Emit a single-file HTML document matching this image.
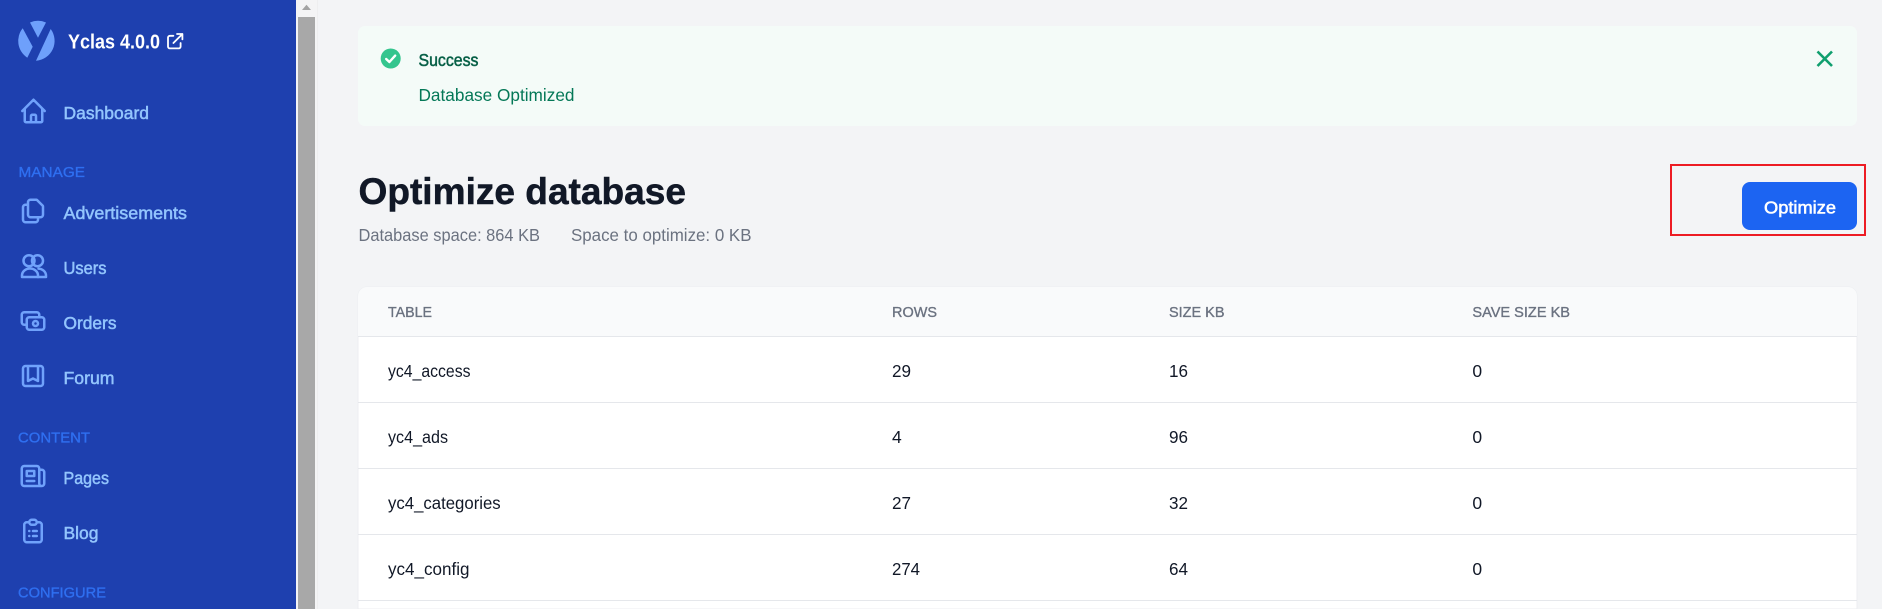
<!DOCTYPE html>
<html lang="en">
<head>
<meta charset="utf-8">
<title>Optimize database</title>
<style>
html,body{margin:0;padding:0;width:1882px;height:609px;overflow:hidden;background:#f3f4f6}
svg{display:block}
text{font-family:"Liberation Sans",sans-serif;white-space:pre}
.nav{font-size:17.5px;fill:#93c5fd;stroke:#93c5fd;stroke-width:.5px}
.sec{font-size:15px;fill:#2f6ff0;stroke:#2f6ff0;stroke-width:.35px}
.th{font-size:15px;fill:#6b7280;stroke:#6b7280;stroke-width:.35px}
.td{font-size:17.5px;fill:#111827}
.ic{fill:none;stroke:#70a2fb;stroke-width:2;stroke-linecap:round;stroke-linejoin:round}
.sub{font-size:17.5px;fill:#6b7280}
</style>
</head>
<body>
<svg xmlns="http://www.w3.org/2000/svg" width="1882" height="609" viewBox="0 0 1882 609">
  <!-- page background -->
  <rect width="1882" height="609" fill="#f3f4f6"/>

  <!-- scrollbar -->
  <rect x="296" y="0" width="22" height="609" fill="#f4f4f5"/>
  <rect x="317" y="0" width="1" height="609" fill="#eeeeef"/>
  <rect x="298" y="17" width="17" height="592" fill="#a8a8a8"/>
  <path d="M302 10L306.5 4.7L311 10Z" fill="#a3a3a3"/>

  <!-- sidebar -->
  <rect width="296" height="609" fill="#1e40af"/>

  <!-- logo -->
  <path d="M30 22.5A20 20 0 0 1 46 22.5L38 37.7Z" fill="#6ea0fb"/>
  <path d="M22.7 28.3A20 20 0 0 0 27.3 57.7L32.7 46.7Z" fill="#6ea0fb"/>
  <path d="M50.7 29A20 20 0 0 1 36 60.8Z" fill="#6ea0fb"/>
  <text x="68" y="48.7" font-size="20" font-weight="700" fill="#fff" textLength="92" lengthAdjust="spacingAndGlyphs">Yclas 4.0.0</text>
  <g transform="translate(164.4 30.4) scale(.9)" fill="none" stroke="#fff" stroke-width="2" stroke-linecap="round" stroke-linejoin="round">
    <path d="M10 6H6a2 2 0 00-2 2v10a2 2 0 002 2h10a2 2 0 002-2v-4M14 4h6m0 0v6m0-6L10 14"/>
  </g>

  <!-- nav icons -->
  <g class="ic" transform="translate(18.5 96) scale(1.25)"><path d="M3 12l2-2m0 0l7-7 7 7M5 10v10a1 1 0 001 1h3m10-11l2 2m-2-2v10a1 1 0 01-1 1h-3m-6 0a1 1 0 001-1v-4a1 1 0 011-1h2a1 1 0 011 1v4a1 1 0 001 1m-6 0h6"/></g>
  <g class="ic" transform="translate(18 196) scale(1.25)"><path d="M8 7v8a2 2 0 002 2h6M8 7V5a2 2 0 012-2h4.586a1 1 0 01.707.293l4.414 4.414a1 1 0 01.293.707V15a2 2 0 01-2 2h-2M8 7H6a2 2 0 00-2 2v10a2 2 0 002 2h8a2 2 0 002-2v-2"/></g>
  <g fill="none" stroke="#70a2fb" stroke-width="2.5" stroke-linecap="round" stroke-linejoin="round">
    <circle cx="29" cy="260.7" r="5.5"/>
    <circle cx="37.5" cy="260.7" r="5.5"/>
    <path d="M22 277v-1.5a8 7 0 0 1 16 0v1.5z"/>
    <path d="M38.5 268.6a8 7 0 0 1 7.5 6.9v1.5h-8"/>
  </g>
  <g class="ic" transform="translate(18 306) scale(1.25)"><path d="M17 9V7a2 2 0 00-2-2H5a2 2 0 00-2 2v6a2 2 0 002 2h2m2 4h10a2 2 0 002-2v-6a2 2 0 00-2-2H9a2 2 0 00-2 2v6a2 2 0 002 2zm7-5a2 2 0 11-4 0 2 2 0 014 0z"/></g>
  <g class="ic" transform="translate(18 361) scale(1.25)"><path d="M16 4v12l-4-2-4 2V4M6 20h12a2 2 0 002-2V6a2 2 0 00-2-2H6a2 2 0 00-2 2v12a2 2 0 002 2z"/></g>
  <g class="ic" transform="translate(18 461) scale(1.25)"><path d="M19 20H5a2 2 0 01-2-2V6a2 2 0 012-2h10a2 2 0 012 2v1m2 13a2 2 0 01-2-2V7m2 13a2 2 0 002-2V9a2 2 0 00-2-2h-2m-4-3H9M7 16h6M7 8h6v4H7V8z"/></g>
  <g class="ic" transform="translate(18 516) scale(1.25)"><path d="M9 5H7a2 2 0 00-2 2v12a2 2 0 002 2h10a2 2 0 002-2V7a2 2 0 00-2-2h-2M9 5a2 2 0 002 2h2a2 2 0 002-2M9 5a2 2 0 012-2h2a2 2 0 012 2m-3 7h3m-3 4h3m-6-4h.01M9 16h.01"/></g>

  <!-- nav text -->
  <text class="nav" x="63.5" y="119" textLength="85.5" lengthAdjust="spacingAndGlyphs">Dashboard</text>
  <text class="sec" x="18.5" y="177" textLength="66.5" lengthAdjust="spacingAndGlyphs">MANAGE</text>
  <text class="nav" x="63.5" y="219" textLength="123.5" lengthAdjust="spacingAndGlyphs">Advertisements</text>
  <text class="nav" x="63.5" y="274" textLength="43" lengthAdjust="spacingAndGlyphs">Users</text>
  <text class="nav" x="63.5" y="329" textLength="53" lengthAdjust="spacingAndGlyphs">Orders</text>
  <text class="nav" x="63.5" y="384" textLength="51" lengthAdjust="spacingAndGlyphs">Forum</text>
  <text class="sec" x="18" y="442.7" textLength="72" lengthAdjust="spacingAndGlyphs">CONTENT</text>
  <text class="nav" x="63.5" y="484" textLength="45.5" lengthAdjust="spacingAndGlyphs">Pages</text>
  <text class="nav" x="63.5" y="539" textLength="35" lengthAdjust="spacingAndGlyphs">Blog</text>
  <text class="sec" x="18" y="597.3" textLength="88" lengthAdjust="spacingAndGlyphs">CONFIGURE</text>

  <!-- alert -->
  <rect x="358" y="26" width="1499" height="100" rx="7" fill="#f4fbf8"/>
  <circle cx="390.7" cy="58.5" r="10" fill="#34c58e"/>
  <path d="M386.2 59L389.4 62L395.2 55.6" fill="none" stroke="#fff" stroke-width="2.4" stroke-linecap="round" stroke-linejoin="round"/>
  <text x="418.5" y="66" font-size="17.5" fill="#065f46" stroke="#065f46" stroke-width=".5" textLength="60" lengthAdjust="spacingAndGlyphs">Success</text>
  <text x="418.5" y="101" font-size="17.5" fill="#047857" textLength="156" lengthAdjust="spacingAndGlyphs">Database Optimized</text>
  <path d="M1817.5 51.5L1832 66M1832 51.5L1817.5 66" fill="none" stroke="#0f9f6e" stroke-width="2.6"/>

  <!-- heading -->
  <text x="358.5" y="204" font-size="37.5" font-weight="700" fill="#111827" stroke="#111827" stroke-width=".5" textLength="327.5" lengthAdjust="spacingAndGlyphs">Optimize database</text>
  <text class="sub" x="358.5" y="241" textLength="181.5" lengthAdjust="spacingAndGlyphs">Database space: 864 KB</text>
  <text class="sub" x="571" y="241" textLength="180.5" lengthAdjust="spacingAndGlyphs">Space to optimize: 0 KB</text>

  <!-- button + highlight -->
  <rect x="1742" y="182" width="115" height="48" rx="8" fill="#1c64f2"/>
  <text x="1764" y="213.3" font-size="17.5" fill="#fff" stroke="#fff" stroke-width=".55" textLength="72" lengthAdjust="spacingAndGlyphs">Optimize</text>
  <rect x="1671" y="165" width="194" height="70" fill="none" stroke="#ed1c24" stroke-width="2"/>

  <!-- table -->
  <path d="M358 609V296a9 9 0 0 1 9-9H1848a9 9 0 0 1 9 9V609Z" fill="#fff" stroke="#eceef1" stroke-width="1"/>
  <path d="M358 336V296a9 9 0 0 1 9-9H1848a9 9 0 0 1 9 9V336Z" fill="#f9fafb"/>
  <g fill="#e5e7eb">
    <rect x="358" y="336" width="1499" height="1"/>
    <rect x="358" y="402" width="1499" height="1"/>
    <rect x="358" y="468" width="1499" height="1"/>
    <rect x="358" y="534" width="1499" height="1"/>
    <rect x="358" y="600" width="1499" height="1"/>
  </g>
  <text class="th" x="388" y="317" textLength="44" lengthAdjust="spacingAndGlyphs">TABLE</text>
  <text class="th" x="892" y="317" textLength="45" lengthAdjust="spacingAndGlyphs">ROWS</text>
  <text class="th" x="1169" y="317" textLength="55.5" lengthAdjust="spacingAndGlyphs">SIZE KB</text>
  <text class="th" x="1472.4" y="317" textLength="97.6" lengthAdjust="spacingAndGlyphs">SAVE SIZE KB</text>

  <text class="td" x="388" y="377" textLength="82.5" lengthAdjust="spacingAndGlyphs">yc4_access</text>
  <text class="td" x="892" y="377" textLength="19" lengthAdjust="spacingAndGlyphs">29</text>
  <text class="td" x="1169" y="377" textLength="19" lengthAdjust="spacingAndGlyphs">16</text>
  <text class="td" x="1472.4" y="377">0</text>

  <text class="td" x="388" y="443" textLength="60" lengthAdjust="spacingAndGlyphs">yc4_ads</text>
  <text class="td" x="892" y="443">4</text>
  <text class="td" x="1169" y="443" textLength="19" lengthAdjust="spacingAndGlyphs">96</text>
  <text class="td" x="1472.4" y="443">0</text>

  <text class="td" x="388" y="509" textLength="112.7" lengthAdjust="spacingAndGlyphs">yc4_categories</text>
  <text class="td" x="892" y="509" textLength="19" lengthAdjust="spacingAndGlyphs">27</text>
  <text class="td" x="1169" y="509" textLength="19" lengthAdjust="spacingAndGlyphs">32</text>
  <text class="td" x="1472.4" y="509">0</text>

  <text class="td" x="388" y="575" textLength="81.5" lengthAdjust="spacingAndGlyphs">yc4_config</text>
  <text class="td" x="892" y="575" textLength="28" lengthAdjust="spacingAndGlyphs">274</text>
  <text class="td" x="1169" y="575" textLength="19" lengthAdjust="spacingAndGlyphs">64</text>
  <text class="td" x="1472.4" y="575">0</text>
</svg>
</body>
</html>
